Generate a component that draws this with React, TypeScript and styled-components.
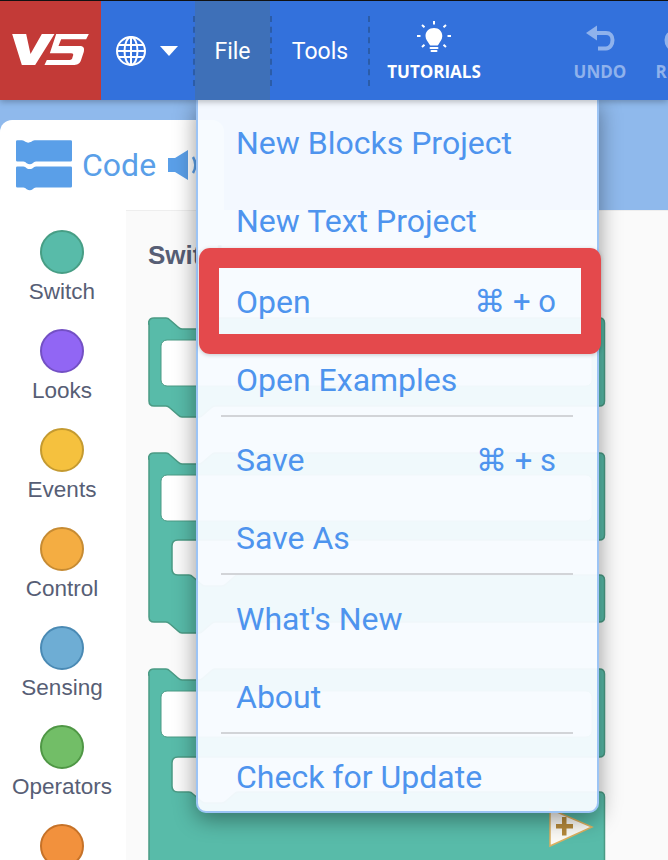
import React from "react";
import styled, { createGlobalStyle } from "styled-components";

const GlobalStyle = createGlobalStyle`
  html, body {
    margin: 0;
    padding: 0;
    background: #fff;
  }
  * {
    box-sizing: border-box;
  }
`;

const Page = styled.div`
  position: relative;
  width: 668px;
  height: 860px;
  overflow: hidden;
  display: flex;
  flex-direction: column;
  font-family: Roboto, sans-serif;
`;

const Header = styled.header`
  position: relative;
  z-index: 3;
  flex: none;
  height: 100px;
  display: flex;
  align-items: stretch;
  overflow: hidden;
  background: #3371dc;
  border-top: 1px solid #111;
  box-shadow: 0 2px 6px rgba(0, 0, 0, 0.25);
`;

const Logo = styled.div`
  flex: none;
  width: 101px;
  background: #c33a37;
  display: flex;
  align-items: center;
  justify-content: center;
  padding-bottom: 2px;
`;

const LangButton = styled.div`
  flex: none;
  width: 92px;
  display: flex;
  align-items: center;
  padding-left: 14px;
  gap: 13px;
`;

const Caret = styled.span`
  width: 0;
  height: 0;
  border-left: 9px solid transparent;
  border-right: 9px solid transparent;
  border-top: 10px solid #fff;
`;

const Separator = styled.div`
  flex: none;
  align-self: center;
  width: 0;
  height: 70px;
  border-left: 2px dashed #2b5ca8;
`;

const NavItem = styled.div<{ $active?: boolean; $width: number }>`
  flex: none;
  width: ${(p) => p.$width}px;
  display: flex;
  align-items: center;
  justify-content: center;
  padding-top: 2px;
  color: #fff;
  font-size: 23px;
  background: ${(p) => (p.$active ? "#3e70b8" : "transparent")};
`;

const ToolButton = styled.div<{ $dim?: boolean; $width: number; $offset?: number }>`
  flex: none;
  width: ${(p) => p.$width}px;
  margin-left: ${(p) => p.$offset ?? 0}px;
  display: flex;
  flex-direction: column;
  align-items: center;
  color: ${(p) => (p.$dim ? "#8fb2ec" : "#fff")};
  font-family: "Open Sans", sans-serif;
  font-weight: 700;
  font-size: 17px;
  line-height: 20px;
  padding-top: 15px;
`;

const IconSlot = styled.div`
  height: 44px;
  margin-bottom: 2px;
  display: flex;
  align-items: center;
  justify-content: center;
`;

const Main = styled.main`
  flex: 1;
  min-height: 0;
  display: flex;
  flex-direction: column;
  padding-top: 20px;
  background: #8fb9ec;
`;

const TabRow = styled.div`
  flex: none;
  width: 224px;
  height: 90px;
  display: flex;
  align-items: center;
  gap: 10px;
  padding-left: 16px;
  background: #fff;
  border-radius: 12px 12px 0 0;
  color: #5a9fe8;
  font-size: 32px;
`;

const Editor = styled.div`
  flex: 1;
  min-height: 0;
  display: flex;
  background: #fff;
`;

const Categories = styled.nav`
  flex: none;
  width: 126px;
  display: flex;
  flex-direction: column;
  align-items: center;
  padding: 20px 2px 0 0;
  gap: 10px;
  background: #fff;
`;

const Category = styled.div`
  flex: none;
  height: 89px;
  display: flex;
  flex-direction: column;
  align-items: center;
  gap: 5px;
  font-family: "Liberation Sans", sans-serif;
  font-size: 22.5px;
  line-height: 26px;
  color: #575e75;
`;

const Dot = styled.span<{ $fill: string; $edge: string }>`
  flex: none;
  width: 44px;
  height: 44px;
  border-radius: 50%;
  background: ${(p) => p.$fill};
  border: 2px solid ${(p) => p.$edge};
`;

const Workspace = styled.section`
  flex: 1;
  min-width: 0;
  padding: 30px 0 0 22px;
  background: #fafafa;
  border-top: 1px solid #eee;
`;

const PaletteTitle = styled.h2`
  margin: 0 0 48px;
  font-family: "Liberation Sans", sans-serif;
  font-size: 26px;
  line-height: 28px;
  font-weight: 700;
  color: #575e75;
`;

const BlockStack = styled.div`
  display: flex;
  flex-direction: column;
  gap: 33px;
`;

const BlockSvg = styled.svg`
  display: block;
  flex: none;
`;

const Menu = styled.div`
  position: absolute;
  z-index: 2;
  left: 196px;
  top: 100px;
  width: 403px;
  height: 713px;
  padding: 8px 24px 0 39px;
  background: rgba(247, 251, 255, 0.96);
  border: 2px solid #9cc4f5;
  border-top-width: 0;
  border-radius: 0 0 10px 10px;
  box-shadow: 0 6px 22px rgba(0, 0, 0, 0.4);
  display: flex;
  flex-direction: column;
  gap: 8.5px;
`;

const MenuGroup = styled.div<{ $divider?: boolean }>`
  flex: none;
  display: flex;
  flex-direction: column;
  gap: 8px;
  margin-left: -16px;
  padding-left: 15px;
  height: 150px;
  border-bottom: 2px solid ${(p) => (p.$divider ? "#d2d4d8" : "transparent")};
`;

const MenuItem = styled.div`
  flex: none;
  height: 70px;
  display: flex;
  align-items: center;
  justify-content: space-between;
  color: #4e94ee;
  font-size: 32px;
  white-space: nowrap;
`;

const Shortcut = styled.span`
  margin-right: 17px;
  font-size: 31px;
  font-family: Roboto, "DejaVu Sans", sans-serif;
`;

const Highlight = styled.div`
  position: absolute;
  z-index: 4;
  left: 199px;
  top: 248px;
  width: 402px;
  height: 106px;
  border: 20px solid #e4494c;
  border-radius: 11px;
  box-shadow: 0 1px 4px rgba(0, 0, 0, 0.2);
`;

const categories = [
  { id: "switch", label: "Switch", fill: "#58bba9", edge: "#479e85" },
  { id: "looks", label: "Looks", fill: "#9166f4", edge: "#7350c4" },
  { id: "events", label: "Events", fill: "#f5c13e", edge: "#c49a30" },
  { id: "control", label: "Control", fill: "#f4ad42", edge: "#c68b33" },
  { id: "sensing", label: "Sensing", fill: "#6eadd4", edge: "#4a8ab4" },
  { id: "operators", label: "Operators", fill: "#72be67", edge: "#4f9745" },
  // the label of this one falls below the fold
  { id: "last", label: "", fill: "#f2913d", edge: "#c67228" },
];

const V5Logo = () => (
  <svg width="77" height="31" viewBox="33 42 230 93">
    <path d="M33 42h42l13 60 34-60h38l-58 93H62z" fill="#fff" />
    <path
      d="M165 42h98l-8 16h-75l-8 20h63c14 0 15 8 13 17l-8 24c-4 13-12 16-25 16h-85l7-15h68c6 0 8-2 9-8l2-6c1-4-1-6-6-6h-64z"
      fill="#fff"
    />
  </svg>
);

const GlobeIcon = () => (
  <svg width="32" height="32" viewBox="0 0 32 32" fill="none" stroke="#fff" strokeWidth="2">
    <circle cx="16" cy="16" r="14" />
    <ellipse cx="16" cy="16" rx="6.5" ry="14" />
    <path d="M16 2v28M3.5 10h25M2 16h28M3.5 22h25" />
  </svg>
);

const BulbIcon = () => (
  <svg width="34" height="34" viewBox="0 0 34 34">
    <path
      d="M17 7c-5 0-8.500 3.500-8.500 8 0 3.500 2.500 5.500 3.700 8 .4.900.8 1.500 1.800 1.500h6c1 0 1.400-.6 1.800-1.500 1.200-2.500 3.500-4.500 3.500-8 0-4.500-3.300-8-8.300-8z"
      fill="#fff"
    />
    <path d="M13.500 27h7M14.500 30h5" stroke="#fff" strokeWidth="2" strokeLinecap="round" />
    <path
      d="M17 0v3.500M5 4l2.500 2.300M29 4l-2.500 2.300M0 15h3.500M30.500 15H34M5 26l2.500-2.300M29 26l-2.500-2.300"
      stroke="#fff"
      strokeWidth="2"
    />
  </svg>
);

const UndoIcon = ({ color }: { color: string }) => (
  <svg width="30" height="26" viewBox="0 0 30 26" fill="none">
    <path d="M1 8l11-7.500v15z" fill={color} />
    <path d="M10 8h11c4 0 6.500 2.500 6.500 7s-2.500 8.500-6.500 8.500h-8" stroke={color} strokeWidth="4" />
  </svg>
);

const RedoIcon = ({ color }: { color: string }) => (
  <svg width="30" height="26" viewBox="0 0 30 26" fill="none">
    <path d="M29 8L18 .5v15z" fill={color} />
    <path d="M20 8H9c-4 0-6.500 2.500-6.500 7s2.500 8.500 6.500 8.500h8" stroke={color} strokeWidth="4" />
  </svg>
);

const CodeIcon = () => (
  <svg width="56" height="51" viewBox="18 28 168 152">
    <path
      d="M22 28h14q6 0 10 5q8 5 18 0q4-5 10-5H182q4 0 4 4V88q0 4-4 4H78q-6 0-10 5q-8 6-18 0q-4-5-10-5H22q-4 0-4-4V32q0-4 4-4z"
      fill="#5a9fe8"
    />
    <path
      d="M22 107h18q6 0 10 5q8 5 18 0q4-5 10-5H182q4 0 4 4V166q0 4-4 4H78q-6 0-10 5q-8 6-18 0q-4-5-10-5H22q-4 0-4-4V111q0-4 4-4z"
      fill="#5a9fe8"
    />
  </svg>
);

const SpeakerIcon = () => (
  <svg width="34" height="32" viewBox="-1 0 34 32" fill="none">
    <path d="M1 9h7L21 1v30L8 23H1z" fill="#5a9fe8" />
    <path d="M26 8c3 5 3 11 0 16" stroke="#5a9fe8" strokeWidth="2.500" />
  </svg>
);

// outline of a stack block: notch on top, bump below, optional open mouth on the right
function blockPath(height: number, mouthTop?: number, mouthHeight = 35) {
  const right = 456.5;
  const bottom = height - 13;
  let d = "M.5 7Q.5 1 6 1H18q2 0 4 2l8 7q2 2 4 2H51q2 0 4-2l8-7q2-2 4-2H" + (right - 5) + "q5 0 5 5";
  if (mouthTop !== undefined) {
    const lip = mouthTop + mouthHeight;
    d += `V${mouthTop - 5}q0 5-5 5H30q-6 0-6 6V${lip - 6}q0 6 6 6H41q2 0 4 2l8 7q2 2 4 2H74q2 0 4-2l8-7q2-2 4-2H${right - 5}q5 0 5 5`;
  }
  d += `V${bottom - 5}q0 5-5 5H67q-2 0-4 2l-8 7q-2 2-4 2H34q-2 0-4-2l-8-7q-2-2-4-2H6q-5 0-5-5V7z`;
  return d;
}

const Block = ({ height, mouthTop, expand }: { height: number; mouthTop?: number; expand?: boolean }) => (
  <BlockSvg width="458" height={height} viewBox={`0 0 458 ${height}`}>
    <path d={blockPath(height, mouthTop)} fill="#58bba9" stroke="#4a9a84" strokeWidth="1.500" />
    <rect x="13" y="23" width="431" height="46" rx="6" fill="#fff" stroke="#4a9a84" strokeWidth="1" />
    {expand && (
      <g>
        <path d="M402 141l42 18-42 19z" fill="#fbfaf6" stroke="#dcb060" strokeWidth="1.500" />
        <path d="M408 156h6v-7h4.500v7h6.500v4.500h-6.500v7H414v-7h-6z" fill="#b5893b" />
      </g>
    )}
  </BlockSvg>
);

type Item = { label: string; shortcut?: string };

const menuGroups: { items: Item[]; divider?: boolean }[] = [
  { items: [{ label: "New Blocks Project" }, { label: "New Text Project" }] },
  { items: [{ label: "Open", shortcut: "⌘ + o" }, { label: "Open Examples" }], divider: true },
  { items: [{ label: "Save", shortcut: "⌘ + s" }, { label: "Save As" }], divider: true },
  { items: [{ label: "What's New" }, { label: "About" }], divider: true },
  { items: [{ label: "Check for Update" }] },
];

const App: React.FC = () => {
  return (
    <Page>
      <GlobalStyle />
      <Header>
        <Logo>
          <V5Logo />
        </Logo>
        <LangButton>
          <GlobeIcon />
          <Caret />
        </LangButton>
        <Separator />
        <NavItem $active $width={75}>File</NavItem>
        <Separator />
        <NavItem $width={96}>Tools</NavItem>
        <Separator />
        <ToolButton $width={128}>
          <IconSlot>
            <BulbIcon />
          </IconSlot>
          TUTORIALS
        </ToolButton>
        <ToolButton $dim $width={78} $offset={63}>
          <IconSlot>
            <UndoIcon color="#8fb2ec" />
          </IconSlot>
          UNDO
        </ToolButton>
        <ToolButton $dim $width={80}>
          <IconSlot>
            <RedoIcon color="#8fb2ec" />
          </IconSlot>
          REDO
        </ToolButton>
      </Header>
      <Main>
        <TabRow>
          <CodeIcon />
          <span>Code</span>
          <SpeakerIcon />
        </TabRow>
        <Editor>
          <Categories>
            {categories.map((c) => (
              <Category key={c.id}>
                <Dot $fill={c.fill} $edge={c.edge} />
                {c.label}
              </Category>
            ))}
          </Categories>
          <Workspace>
            <PaletteTitle>Switch</PaletteTitle>
            <BlockStack>
              <Block height={102} />
              <Block height={183} mouthTop={88} />
              <Block height={240} mouthTop={89} expand />
            </BlockStack>
          </Workspace>
        </Editor>
      </Main>
      <Menu>
        {menuGroups.map((g) => (
          <MenuGroup key={g.items[0].label} $divider={g.divider}>
            {g.items.map((item) => (
              <MenuItem key={item.label}>
                {item.label}
                {item.shortcut && <Shortcut>{item.shortcut}</Shortcut>}
              </MenuItem>
            ))}
          </MenuGroup>
        ))}
      </Menu>
      <Highlight />
    </Page>
  );
};

export default App;
